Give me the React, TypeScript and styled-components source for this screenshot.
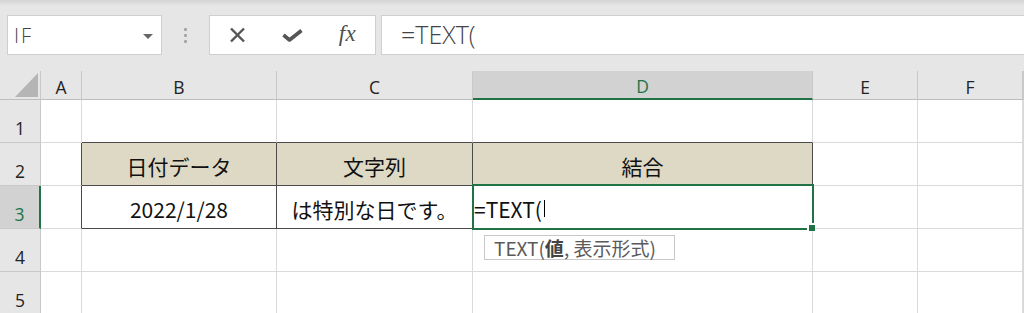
import React from "react";
import styled, { createGlobalStyle } from "styled-components";

const GlobalStyle = createGlobalStyle`
    html, body {
        margin: 0;
        padding: 0;
        background: #ffffff;
        overflow: hidden;
    }
    * {
        box-sizing: border-box;
    }
`;

const GREEN = "#217346";
const UI_FONT = `"Open Sans", "Noto Sans", sans-serif`;
const CELL_FONT = `"Noto Sans CJK JP", "Noto Sans", sans-serif`;

const Page = styled.div`
    width: 1024px;
    height: 313px;
    overflow: hidden;
    font-family: ${UI_FONT};
`;

const Toolbar = styled.div`
    display: flex;
    align-items: stretch;
    height: 71px;
    padding: 15px 0 16px 7px;
    background: linear-gradient(#d3d3d3, #e6e6e6 6px);
`;

const NameBox = styled.div`
    display: flex;
    align-items: center;
    justify-content: space-between;
    width: 155px;
    padding: 0 8px 0 6px;
    background: #fff;
    border: 1px solid #cfcfcf;
    font-size: 20px;
    font-weight: 300;
    letter-spacing: 2px;
    color: #444;
`;

const Caret = styled.span`
    width: 0;
    height: 0;
    border-left: 5.5px solid transparent;
    border-right: 5.5px solid transparent;
    border-top: 5px solid #666;
    margin-top: 2px;
`;

const Grip = styled.div`
    display: flex;
    flex-direction: column;
    align-items: center;
    justify-content: center;
    gap: 3px;
    width: 47px;
`;

const GripDot = styled.span`
    width: 3px;
    height: 3px;
    border-radius: 1px;
    background: #a6a6a6;
`;

const FormulaButtons = styled.div`
    display: grid;
    grid-template-columns: repeat(3, 1fr);
    width: 167px;
    background: #fff;
    border: 1px solid #cfcfcf;
`;

const FormulaButton = styled.div`
    display: flex;
    align-items: center;
    justify-content: center;
    color: #555;
`;

const Fx = styled.span`
    font-family: "Liberation Serif", "DejaVu Serif", serif;
    font-style: italic;
    font-size: 23px;
    color: #4f4f4f;
    letter-spacing: 0.5px;
    margin-top: -2px;
`;

const FormulaInput = styled.div`
    flex: 1;
    margin: 0 -4px 0 5px;
    display: flex;
    align-items: center;
    padding: 0 0 2px 19px;
    background: #fff;
    border: 1px solid #cfcfcf;
    font-size: 25px;
    font-weight: 300;
    color: #444;
`;

const Sheet = styled.div`
    display: grid;
    grid-template-columns: 41px 41px 195px 196px 340px 105px 105px 1fr;
    grid-template-rows: 29px;
    grid-auto-rows: 43px;
`;

const ColHeader = styled.div<{ $active?: boolean }>`
    display: flex;
    align-items: center;
    justify-content: center;
    padding-top: 3px;
    background: ${(p) => (p.$active ? "#d2d2d2" : "#e6e6e6")};
    border-right: 1px solid #c9c9c9;
    border-bottom: ${(p) => (p.$active ? `2px solid ${GREEN}` : "1px solid #bdbdbd")};
    color: ${(p) => (p.$active ? GREEN : "#222")};
    font-size: 17.5px;
`;

const Corner = styled.div`
    position: relative;
    background: #e6e6e6;
    border-right: 1px solid #c9c9c9;
    border-bottom: 1px solid #bdbdbd;

    &::after {
        content: "";
        position: absolute;
        right: 2px;
        bottom: 2px;
        width: 0;
        height: 0;
        border-left: 23px solid transparent;
        border-bottom: 24px solid #b5b5b5;
    }
`;

const RowHeader = styled.div<{ $active?: boolean }>`
    display: flex;
    align-items: flex-end;
    justify-content: center;
    padding-bottom: 5px;
    background: ${(p) => (p.$active ? "#d2d2d2" : "#e6e6e6")};
    border-right: ${(p) => (p.$active ? `2px solid ${GREEN}` : "1px solid #c9c9c9")};
    border-bottom: 1px solid #c9c9c9;
    color: ${(p) => (p.$active ? GREEN : "#222")};
    font-size: 17.5px;
    line-height: 1;
`;

const Cell = styled.div<{ $fill?: string; $darkRight?: boolean; $darkBottom?: boolean; $align?: string; $active?: boolean }>`
    position: relative;
    z-index: ${(p) => (p.$active ? 1 : "auto")};
    display: flex;
    align-items: center;
    justify-content: ${(p) => p.$align || "center"};
    padding-top: 3px;
    background: ${(p) => p.$fill || "#fff"};
    border-right: 1px solid ${(p) => (p.$darkRight ? "#4a4a4a" : "#dadada")};
    border-bottom: 1px solid ${(p) => (p.$darkBottom ? "#4a4a4a" : "#dadada")};
    font-family: ${CELL_FONT};
    font-size: 21px;
    color: #111;
    white-space: nowrap;
`;

const EditText = styled.span`
    display: flex;
    align-items: center;
    padding-left: 1px;
`;

const TextCursor = styled.span`
    display: inline-block;
    width: 1px;
    height: 17px;
    margin-left: 2px;
    background: #000;
`;

const Selection = styled.div`
    position: absolute;
    top: -2px;
    left: -1px;
    right: -2px;
    bottom: -2px;
    border: 2px solid ${GREEN};
    pointer-events: none;
`;

const FillHandle = styled.span`
    position: absolute;
    right: -3px;
    bottom: -3px;
    width: 6px;
    height: 6px;
    background: ${GREEN};
    box-shadow: -1px -1px 0 1px #fff;
`;

const Tooltip = styled.div`
    position: absolute;
    top: 49px;
    left: 11px;
    width: 191px;
    height: 25px;
    display: flex;
    align-items: center;
    padding: 0 0 1px 9px;
    background: #fff;
    border: 1px solid #c8c8c8;
    font-family: ${CELL_FONT};
    font-size: 19px;
    color: #5a5a5a;

    b {
        font-weight: 700;
        color: #444;
    }
`;

const columns = ["A", "B", "C", "D", "E", "F", ""];
const rows = [1, 2, 3, 4, 5];

const HEADER_FILL = "#ddd9c4";

const content: Record<string, React.ReactNode> = {
    B2: "日付データ",
    C2: "文字列",
    D2: "結合",
    B3: "2022/1/28",
    C3: "は特別な日です。",
};

const inTable = (col: number, row: number) => col >= 1 && col <= 3 && row >= 2 && row <= 3;

const CloseIcon = () => (
    <svg width="17" height="16" viewBox="0 0 17 16">
        <path d="M2 1.5 L15 14.5 M15 1.5 L2 14.5" stroke="#555" strokeWidth="2.4" fill="none" />
    </svg>
);

const CheckIcon = () => (
    <svg width="21" height="13" viewBox="0 0 21 13">
        <path d="M1.5 6 L7.5 11 L19.5 1.5" stroke="#555" strokeWidth="3.6" fill="none" strokeLinejoin="round" />
    </svg>
);

const App = () => {
    return (
        <Page>
            <GlobalStyle />
            <Toolbar>
                <NameBox>
                    IF
                    <Caret />
                </NameBox>
                <Grip>
                    <GripDot />
                    <GripDot />
                    <GripDot />
                </Grip>
                <FormulaButtons>
                    <FormulaButton>
                        <CloseIcon />
                    </FormulaButton>
                    <FormulaButton>
                        <CheckIcon />
                    </FormulaButton>
                    <FormulaButton>
                        <Fx>fx</Fx>
                    </FormulaButton>
                </FormulaButtons>
                <FormulaInput>=TEXT(</FormulaInput>
            </Toolbar>

            <Sheet>
                <Corner />
                {columns.map((c) => (
                    <ColHeader key={c || "G"} $active={c === "D"}>
                        {c}
                    </ColHeader>
                ))}

                {rows.map((r) => (
                    <React.Fragment key={r}>
                        <RowHeader $active={r === 3}>{r}</RowHeader>
                        {columns.map((c, ci) => {
                            const id = `${c}${r}`;
                            const darkRight = inTable(ci, r) || (ci === 0 && r >= 2 && r <= 3);
                            const darkBottom = inTable(ci, r) || (r === 1 && ci >= 1 && ci <= 3);

                            if (id === "D3") {
                                return (
                                    <Cell key={id} $active $darkRight $darkBottom $align="flex-start">
                                        <EditText>
                                            =TEXT(
                                            <TextCursor />
                                        </EditText>
                                        <Selection>
                                            <FillHandle />
                                        </Selection>
                                        <Tooltip>
                                            TEXT(<b>値</b>, 表示形式)
                                        </Tooltip>
                                    </Cell>
                                );
                            }

                            return (
                                <Cell
                                    key={id}
                                    $fill={r === 2 && inTable(ci, r) ? HEADER_FILL : undefined}
                                    $darkRight={darkRight}
                                    $darkBottom={darkBottom}
                                >
                                    {content[id]}
                                </Cell>
                            );
                        })}
                    </React.Fragment>
                ))}
            </Sheet>
        </Page>
    );
};

export default App;
